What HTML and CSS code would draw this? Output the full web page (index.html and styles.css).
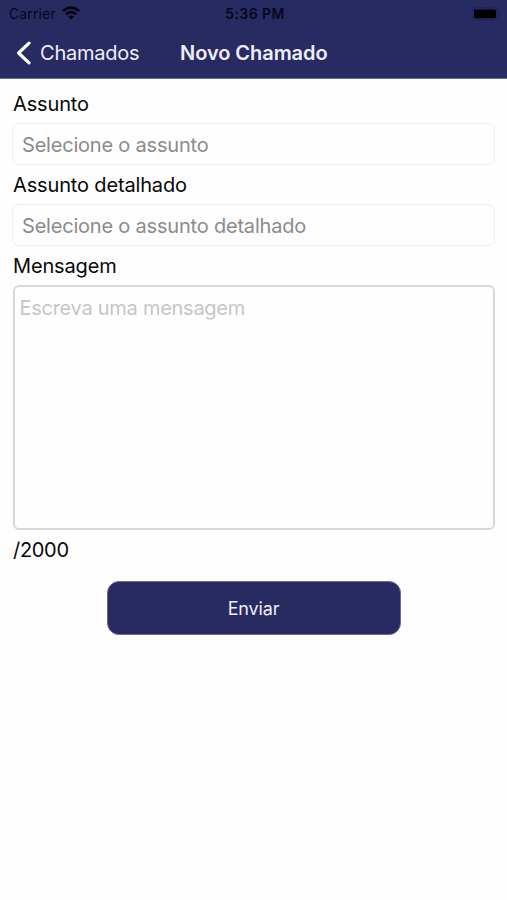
FILE: index.html
```html
<!DOCTYPE html>
<html lang="pt-BR">
<head>
<meta charset="utf-8">
<title>Novo Chamado</title>
<link rel="stylesheet" href="styles.css">
</head>
<body>
<header class="header">
  <div class="status">
    <div class="status-left">
      <span class="carrier">Carrier</span>
      <svg class="wifi" width="18" height="14" viewBox="0 0 18 14" fill="none" stroke="#050510" stroke-width="2.7">
        <path d="M1 5.1C5.5.5 12.5.5 17 5.1"/>
        <path d="M4 8.3c2.9-2.9 7.1-2.9 10 0"/>
        <path d="M9 13.6 6.1 10.7c1.7-1.5 4.1-1.5 5.8 0z" fill="#050510" stroke="none"/>
      </svg>
    </div>
    <span class="clock">5:36 PM</span>
    <svg class="battery" width="29" height="14" viewBox="0 0 29 14">
      <rect x=".5" y=".8" width="25" height="12" rx="3.5" fill="none" stroke="#1f2055"/>
      <rect x="2" y="2.6" width="22" height="8.6" rx="1.8" fill="#000"/>
      <path d="M27 4.5c1.5.8 1.5 3.7 0 4.5z" fill="#1f2055"/>
    </svg>
  </div>
  <nav class="nav">
    <a class="back">
      <svg class="chevron" width="16" height="24" viewBox="0 0 16 24" fill="none" stroke="#fff" stroke-width="3.2" stroke-linecap="round" stroke-linejoin="round"><path d="M14 2.2 3.6 12 14 21.8"/></svg>
      <span>Chamados</span>
    </a>
    <h1 class="title">Novo Chamado</h1>
  </nav>
</header>
<main class="form">
  <label class="label">Assunto</label>
  <div class="select">Selecione o assunto</div>
  <label class="label detail">Assunto detalhado</label>
  <div class="select">Selecione o assunto detalhado</div>
  <label class="label message-label">Mensagem</label>
  <div class="message">Escreva uma mensagem</div>
  <div class="counter">/2000</div>
  <button class="send">Enviar</button>
</main>
</body>
</html>
```
FILE: styles.css
```css
* { box-sizing: border-box; }
body {
  margin: 0;
  min-height: 900px;
  background: #fefefe;
  color: #080808;
  font-family: Inter, "Liberation Sans", sans-serif;
  font-size: 20px;
  white-space: nowrap;
}
.header {
  height: 79px;
  background: #282a62;
  border-bottom: 1px solid #6b6c94;
}
.status {
  display: grid;
  grid-template-columns: 1fr auto 1fr;
  align-items: center;
  height: 27px;
  padding: 0 6px 0 9px;
  color: #07071a;
  font-size: 14px;
}
.status-left { display: flex; align-items: center; gap: 6px; }
.carrier { letter-spacing: .1px; }
.wifi { margin-top: -2px; }
.clock { font-weight: 600; letter-spacing: .4px; }
.battery { justify-self: end; }
.nav {
  display: flex;
  align-items: center;
  height: 51px;
  padding-left: 15px;
  color: #eeeef8;
}
.back { display: flex; align-items: center; width: 165px; gap: 9px; letter-spacing: -.22px; }
.title { margin: 0; font-size: 20px; font-weight: 600; letter-spacing: -.05px; }
.form { display: flex; flex-direction: column; padding: 11px 12px 0; }
.label { height: 33px; padding-left: 1px; line-height: 29px; letter-spacing: -.15px; }
.detail, .message-label { margin-top: 6px; }
.select {
  height: 42px;
  padding-left: 9px;
  border: 1px solid #efefef;
  border-radius: 7px;
  color: #8b8b8b;
  line-height: 43px;
  letter-spacing: -.2px;
}
.message {
  height: 245px;
  margin: 0 0 0 1px;
  padding: 7px 4.5px;
  border: 2px solid #d8d8d8;
  border-radius: 6px;
  color: #c6c6c6;
  line-height: 28px;
  letter-spacing: -.27px;
}
.counter { height: 51px; padding-left: 1px; line-height: 41px; letter-spacing: -.3px; }
.send {
  align-self: center;
  width: 294px;
  height: 54px;
  border: 1px solid #6b6c94;
  border-radius: 12px;
  background: #282a62;
  color: #eeeef8;
  font: 400 18px Inter, "Liberation Sans", sans-serif;
  letter-spacing: -.15px;
}
```
